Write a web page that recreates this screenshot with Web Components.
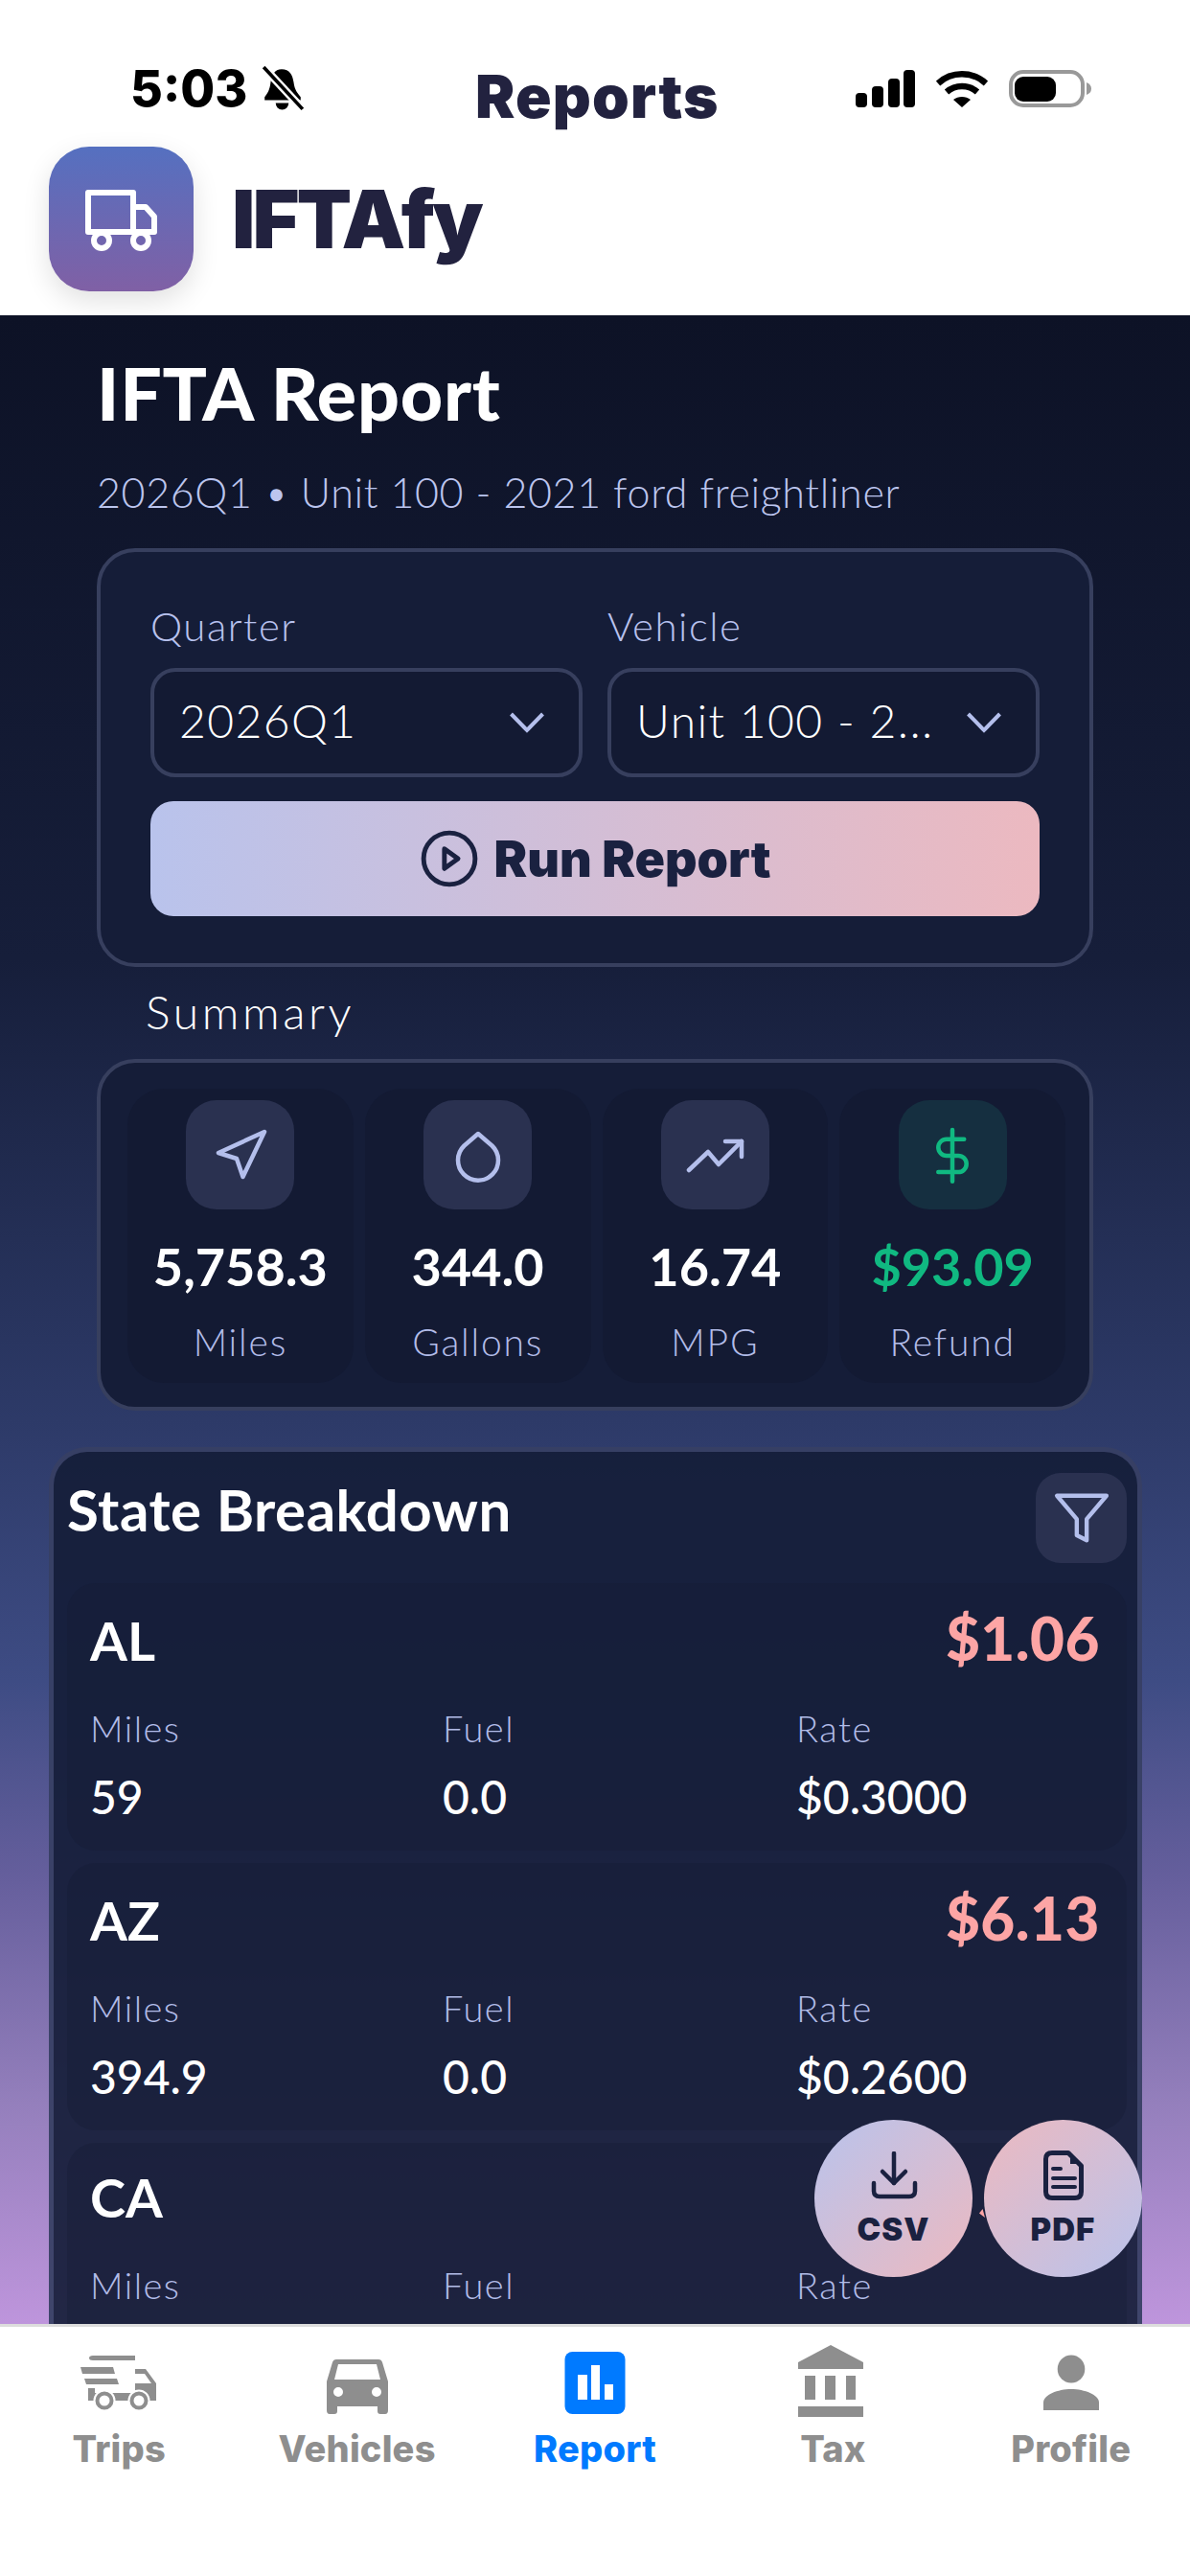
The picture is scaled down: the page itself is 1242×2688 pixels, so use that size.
<!DOCTYPE html>
<html lang="en">
<head>
<meta charset="utf-8">
<title>IFTAfy Reports</title>
<style>
  html, body { margin: 0; padding: 0; }
  body {
    width: 1242px;
    height: 2688px;
    overflow: hidden;
    display: flex;
    flex-direction: column;
    background: #fff;
    font-family: "Lato", "Noto Sans", sans-serif;
  }
</style>
</head>
<body>
  <app-header></app-header>

  <report-screen>
    <report-filters></report-filters>
    <summary-panel>
      <stat-tile value="5,758.3" label="Miles">
        <svg width="113" height="114" viewBox="0 0 113 114" fill="none" stroke="#b4bfec" stroke-width="4.5" stroke-linejoin="round"><path d="M82 33L34 55L53 61L59.5 80Z"/></svg>
      </stat-tile>
      <stat-tile value="344.0" label="Gallons">
        <svg width="113" height="114" viewBox="0 0 113 114" fill="none" stroke="#b4bfec" stroke-width="4.5" stroke-linejoin="round"><path d="M57 35L71.5 47.5A21 21 0 1 1 42.5 47.5Z"/></svg>
      </stat-tile>
      <stat-tile value="16.74" label="MPG">
        <svg width="113" height="114" viewBox="0 0 113 114" fill="none" stroke="#b4bfec" stroke-width="4.5" stroke-linecap="round" stroke-linejoin="round"><path d="M29 73L49 54L60 67L84 43"/><path d="M67 43H84V59"/></svg>
      </stat-tile>
      <stat-tile value="$93.09" label="Refund" refund>
        <svg width="113" height="114" viewBox="0 0 113 114" fill="none" stroke="#10b981" stroke-width="1.85" stroke-linecap="round" stroke-linejoin="round"><g transform="translate(26.6 28.5) scale(2.45)"><path d="M12 1V23"/><path d="M17 5H9.5a3.5 3.5 0 0 0 0 7h5a3.5 3.5 0 0 1 0 7H6"/></g></svg>
      </stat-tile>
    </summary-panel>
    <state-breakdown>
      <state-row code="AL" amount="$1.06" miles="59" fuel="0.0" rate="$0.3000"></state-row>
      <state-row code="AZ" amount="$6.13" miles="394.9" fuel="0.0" rate="$0.2600"></state-row>
      <state-row code="CA" miles=" " fuel=" " rate=" "></state-row>
    </state-breakdown>
    <export-dock slot="over"></export-dock>
  </report-screen>

  <tab-bar>
    <tab-item label="Trips">
      <svg width="100" height="76" viewBox="0 0 100 76" fill="#8e8e8e">
        <path d="M23 11H67V58H60V50H67V16H23Q19 16 19 13.5Q19 11 23 11Z"/>
        <path d="M10 23H44L46 30H12Z"/>
        <path d="M14 35H48L50 41H16Z"/>
        <path d="M18 45H25V50H29V58H18Z"/>
        <rect x="42" y="50" width="20" height="8"/>
        <path fill-rule="evenodd" d="M67 25H78L89 40V58H67ZM67 30V40H84L77 30Z"/>
        <circle cx="35" cy="58" r="10.5" stroke="#fff" stroke-width="2"/>
        <circle cx="35" cy="58" r="5.5" fill="#fff"/>
        <circle cx="71" cy="58" r="10.5" stroke="#fff" stroke-width="2"/>
        <circle cx="71" cy="58" r="5.5" fill="#fff"/>
      </svg>
    </tab-item>
    <tab-item label="Vehicles">
      <svg width="100" height="76" viewBox="0 0 100 76" fill="#8e8e8e">
        <path fill-rule="evenodd" d="M28 15H72Q75 15 76 18L82 38V68Q82 72 79 72H74Q71 72 71 69V64H29V69Q29 72 26 72H21Q18 72 18 68V38L24 18Q25 15 28 15ZM30 20L26 36H74L70 20ZM30 44A5 5 0 1 0 30 54A5 5 0 1 0 30 44ZM70 44A5 5 0 1 0 70 54A5 5 0 1 0 70 44Z"/>
      </svg>
    </tab-item>
    <tab-item label="Report" active>
      <svg width="100" height="76" viewBox="0 0 100 76" fill="#007aff">
        <rect x="18.5" y="7" width="63" height="65" rx="8"/>
        <rect x="32" y="31" width="10" height="26" fill="#fff"/>
        <rect x="46" y="21" width="9" height="36" fill="#fff"/>
        <rect x="60" y="41" width="9" height="16" fill="#fff"/>
      </svg>
    </tab-item>
    <tab-item label="Tax">
      <svg width="100" height="76" viewBox="0 0 100 76" fill="#8e8e8e">
        <path d="M14 18L48 0L82 18V25H14Z"/>
        <rect x="21" y="32" width="11" height="25"/>
        <rect x="42" y="32" width="11" height="25"/>
        <rect x="64" y="32" width="10" height="25"/>
        <rect x="14" y="64" width="68" height="11"/>
      </svg>
    </tab-item>
    <tab-item label="Profile">
      <svg width="100" height="76" viewBox="0 0 100 76" fill="#8e8e8e">
        <ellipse cx="50" cy="25" rx="14.3" ry="14.5"/>
        <path d="M21 68V60C21 52 36 46 50 46C64 46 79 52 79 60V68Z"/>
      </svg>
    </tab-item>
  </tab-bar>

<script>
(function () {
  var headerTemplate = document.createElement('template');
  headerTemplate.innerHTML = `
    <style>
      :host {
        display: block;
        height: 329px;
        flex: none;
        background: #fff;
        font-family: "Inter", sans-serif;
        color: #22223f;
      }
      .status {
        display: grid;
        grid-template-columns: 360px auto 1fr;
        padding: 63px 103px 17px 136px;
        height: 73px;
      }
      .left { display: flex; align-items: center; gap: 14px; height: 60px; }
      .time { font-size: 52px; line-height: 60px; font-weight: 800; color: #000; }
      .title { font-size: 62px; line-height: 70px; margin-top: 3px; font-weight: 900; letter-spacing: 1.2px; }
      .right { display: flex; align-items: center; justify-content: flex-end; gap: 22px; height: 60px; }
      .brand { display: flex; align-items: center; gap: 40px; padding-left: 51px; }
      .logo {
        width: 151px;
        height: 151px;
        border-radius: 42px;
        background: linear-gradient(180deg, #5570c0, #8060a5);
        box-shadow: 0 10px 28px rgba(0, 0, 0, 0.12);
      }
      .logo svg { display: block; }
      .name { font-size: 84px; line-height: 100px; font-weight: 900; letter-spacing: -3px; }
    </style>
    <div class="status">
      <div class="left">
        <span class="time">5:03</span>
        <svg width="46" height="48" viewBox="0 0 44 46" fill="#000">
          <path d="M21 3C29 3 32 9 33 16C34 24 37 27 40 31V34H4V31C7 27 9 24 10 16C11 9 14 3 21 3Z"/>
          <path d="M15 37H28A6.5 6.5 0 0 1 15 37Z"/>
          <path d="M3 1L42 43" stroke="#fff" stroke-width="8"/>
          <path d="M3 1L42 43" stroke="#000" stroke-width="3.5"/>
        </svg>
      </div>
      <div class="title">Reports</div>
      <div class="right">
        <svg width="62" height="40" viewBox="0 0 62 40" fill="#000">
          <rect x="0" y="24" width="12" height="15" rx="4"/>
          <rect x="17" y="17" width="12" height="22" rx="4"/>
          <rect x="34" y="9" width="12" height="30" rx="4"/>
          <rect x="50" y="0" width="12" height="39" rx="4"/>
        </svg>
        <svg width="54" height="40" viewBox="0 0 54 40" fill="none" stroke="#000" stroke-width="6.5">
          <path d="M2 14C16 1 38 1 52 14"/>
          <path d="M11 23C20 15 34 15 43 23"/>
          <path d="M27 39L18 31C23 27 31 27 36 31Z" fill="#000" stroke="none"/>
        </svg>
        <svg width="86" height="40" viewBox="0 0 86 40" fill="none">
          <rect x="2" y="2" width="75" height="35" rx="13" stroke="#999" stroke-width="4"/>
          <rect x="6" y="7" width="43" height="26" rx="9" fill="#000"/>
          <path d="M81 13Q86 15 86 19.5Q86 24 81 26Z" fill="#999"/>
        </svg>
      </div>
    </div>
    <div class="brand">
      <div class="logo">
        <svg width="151" height="151" viewBox="0 0 151 151" fill="none" stroke="#fff" stroke-width="6" stroke-linejoin="round">
          <path d="M41 48H88V89H41Z"/>
          <path d="M88 63H101L110 73V89H88"/>
          <circle cx="55" cy="98" r="8"/>
          <circle cx="96" cy="98" r="8"/>
        </svg>
      </div>
      <div class="name">IFTAfy</div>
    </div>
  `;

  class AppHeader extends HTMLElement {
    constructor() {
      super();
      this.attachShadow({ mode: 'open' });
      this.shadowRoot.appendChild(headerTemplate.content.cloneNode(true));
    }
  }

  var screenTemplate = document.createElement('template');
  screenTemplate.innerHTML = `
    <style>
      :host {
        display: block;
        position: relative;
        flex: 1;
        min-height: 0;
        overflow: hidden;
        color: #fff;
        background: linear-gradient(180deg, #0d1226 0%, #161e3a 32%, #2d3a68 55%, #3e4c84 68%, #665f9d 78%, #947fbc 89%, #be95dc 100%);
      }
      .column { padding: 40px 101px 0; }
      h1 { margin: 0; font-size: 77px; line-height: 80px; font-weight: 900; letter-spacing: 0.8px; }
      .sub { margin-top: 40px; font-size: 43px; line-height: 50px; color: #bcc5ee; font-weight: 300; letter-spacing: 0.65px; }
      .heading { margin: 19px 0 21px 51px; font-size: 48px; line-height: 56px; font-weight: 300; letter-spacing: 3.6px; }
      ::slotted(report-filters) { margin-top: 33px; }
    </style>
    <div class="column">
      <h1>IFTA Report</h1>
      <div class="sub">2026Q1 • Unit 100 - 2021 ford freightliner</div>
      <slot name="top"></slot>
      <div class="heading">Summary</div>
      <slot></slot>
    </div>
    <slot name="over"></slot>
  `;

  class ReportScreen extends HTMLElement {
    constructor() {
      super();
      this.attachShadow({ mode: 'open' });
      this.shadowRoot.appendChild(screenTemplate.content.cloneNode(true));
    }
    connectedCallback() {
      // filters sit above the Summary heading
      var filters = this.querySelector('report-filters');
      if (filters) filters.setAttribute('slot', 'top');
    }
  }

  var filtersTemplate = document.createElement('template');
  filtersTemplate.innerHTML = `
    <style>
      :host {
        display: block;
        box-sizing: border-box;
        height: 437px;
        padding: 53px 52px 0;
        background: #151d38;
        border: 4px solid #373f5e;
        border-radius: 40px;
      }
      .fields { display: grid; grid-template-columns: 1fr 1fr; gap: 26px; }
      .run {
        display: flex;
        align-items: center;
        justify-content: center;
        gap: 16px;
        height: 120px;
        margin-top: 25px;
        border-radius: 24px;
        background: linear-gradient(90deg, #b9c3ec, #ecb9c0);
        color: #1a2140;
        font-family: "Inter", sans-serif;
        font-size: 52px;
        font-weight: 900;
      }
    </style>
    <div class="fields">
      <select-field label="Quarter" value="2026Q1"></select-field>
      <select-field label="Vehicle" value="Unit 100 - 2..."></select-field>
    </div>
    <div class="run">
      <svg width="62" height="62" viewBox="0 0 24 24" fill="none" stroke="#1a2140" stroke-width="1.9" stroke-linejoin="round"><circle cx="12" cy="12" r="10.4"/><path d="M10 8L15.5 12L10 16Z"/></svg>
      <span>Run Report</span>
    </div>
  `;

  class ReportFilters extends HTMLElement {
    constructor() {
      super();
      this.attachShadow({ mode: 'open' });
      this.shadowRoot.appendChild(filtersTemplate.content.cloneNode(true));
    }
  }

  var selectTemplate = document.createElement('template');
  selectTemplate.innerHTML = `
    <style>
      :host { display: block; min-width: 0; }
      .label { font-size: 42px; line-height: 46px; color: #b8c2ee; letter-spacing: 1.5px; font-weight: 300; padding-top: 1px; margin-bottom: -1px; }
      .box {
        box-sizing: border-box;
        display: flex;
        align-items: center;
        justify-content: space-between;
        height: 114px;
        margin-top: 22px;
        padding: 0 36px 0 26px;
        background: #131a33;
        border: 4px solid #373f5e;
        border-radius: 26px;
      }
      .value { font-size: 48px; white-space: nowrap; color: #fff; font-weight: 300; letter-spacing: 1.4px; padding-bottom: 5px; }
    </style>
    <div class="label"></div>
    <div class="box">
      <span class="value"></span>
      <svg width="36" height="22" viewBox="0 0 36 22" fill="none" stroke="#b4bfec" stroke-width="4"><path d="M1.5 2L18 19L34.500 2"/></svg>
    </div>
  `;

  class SelectField extends HTMLElement {
    constructor() {
      super();
      this.attachShadow({ mode: 'open' });
      this.shadowRoot.appendChild(selectTemplate.content.cloneNode(true));
      this.shadowRoot.querySelector('.label').textContent = this.getAttribute('label');
      this.shadowRoot.querySelector('.value').textContent = this.getAttribute('value');
    }
  }

  var summaryTemplate = document.createElement('template');
  summaryTemplate.innerHTML = `
    <style>
      :host {
        display: grid;
        grid-template-columns: repeat(4, 1fr);
        gap: 12px;
        box-sizing: border-box;
        height: 367px;
        padding: 27px 25px 25px 28px;
        background: #151d38;
        border: 4px solid #373f5e;
        border-radius: 40px;
      }
    </style>
    <slot></slot>
  `;

  class SummaryPanel extends HTMLElement {
    constructor() {
      super();
      this.attachShadow({ mode: 'open' });
      this.shadowRoot.appendChild(summaryTemplate.content.cloneNode(true));
    }
  }

  var tileTemplate = document.createElement('template');
  tileTemplate.innerHTML = `
    <style>
      :host {
        display: flex;
        flex-direction: column;
        align-items: center;
        min-width: 0;
        padding-top: 12px;
        background: #131a33;
        border-radius: 38px;
      }
      .icon {
        width: 113px;
        height: 114px;
        border-radius: 32px;
        background: #2a3150;
      }
      :host([refund]) .icon { background: #152f40; }
      ::slotted(svg) { display: block; }
      .value { margin-top: 30px; font-size: 54px; line-height: 60px; font-weight: 700; color: #fff; }
      :host([refund]) .value { color: #10b981; }
      .label { margin-top: 25px; font-size: 39px; line-height: 46px; color: #b2bce8; letter-spacing: 1.8px; font-weight: 300; }
    </style>
    <div class="icon"><slot></slot></div>
    <div class="value"></div>
    <div class="label"></div>
  `;

  class StatTile extends HTMLElement {
    constructor() {
      super();
      this.attachShadow({ mode: 'open' });
      this.shadowRoot.appendChild(tileTemplate.content.cloneNode(true));
      this.shadowRoot.querySelector('.value').textContent = this.getAttribute('value');
      this.shadowRoot.querySelector('.label').textContent = this.getAttribute('label');
    }
  }

  var breakdownTemplate = document.createElement('template');
  breakdownTemplate.innerHTML = `
    <style>
      :host {
        display: block;
        box-sizing: border-box;
        width: 1141px;
        margin: 38px 0 0 -50px;
        padding: 22px 11px 0 14px;
        background: rgba(21, 29, 56, 0.92);
        border: 5px solid rgba(150, 160, 220, 0.25);
        border-radius: 40px;
      }
      .top { display: flex; align-items: center; justify-content: space-between; margin-bottom: 21px; }
      h2 { margin: -18px 0 0; font-size: 60px; line-height: 68px; font-weight: 700; letter-spacing: 0.5px; }
      .filter {
        width: 95px;
        height: 94px;
        display: flex;
        align-items: center;
        justify-content: center;
        background: #2a3150;
        border-radius: 26px;
      }
      .rows { display: grid; gap: 13px; }
    </style>
    <div class="top">
      <h2>State Breakdown</h2>
      <div class="filter">
        <svg width="62" height="62" viewBox="0 0 24 24" fill="none" stroke="#b4bfec" stroke-width="1.7" stroke-linejoin="round"><path d="M2 3H22L14 12.46V21L10 19V12.46Z"/></svg>
      </div>
    </div>
    <div class="rows"><slot></slot></div>
  `;

  class StateBreakdown extends HTMLElement {
    constructor() {
      super();
      this.attachShadow({ mode: 'open' });
      this.shadowRoot.appendChild(breakdownTemplate.content.cloneNode(true));
    }
  }

  var rowTemplate = document.createElement('template');
  rowTemplate.innerHTML = `
    <style>
      :host {
        display: block;
        box-sizing: border-box;
        height: 279px;
        padding: 26px 28px 0 24px;
        background: rgba(20, 28, 50, 0.3);
        border-radius: 30px;
      }
      .head { display: flex; justify-content: space-between; align-items: baseline; }
      .code { font-size: 56px; line-height: 62px; font-weight: 700; }
      .amount { font-size: 62px; line-height: 62px; font-weight: 900; color: #fda5a5; letter-spacing: 0.5px; }
      .cols { display: grid; grid-template-columns: 368px 369px 1fr; margin-top: 38px; }
      .key { font-size: 38px; line-height: 44px; color: #b2bce8; font-weight: 300; letter-spacing: 1.5px; }
      .val { margin-top: 24px; font-size: 48px; line-height: 52px; font-weight: 500; color: #fff; }
    </style>
    <div class="head"><span class="code"></span><span class="amount"></span></div>
    <div class="cols">
      <div><div class="key">Miles</div><div class="val" data-k="miles"></div></div>
      <div><div class="key">Fuel</div><div class="val" data-k="fuel"></div></div>
      <div><div class="key">Rate</div><div class="val" data-k="rate"></div></div>
    </div>
  `;

  class StateRow extends HTMLElement {
    constructor() {
      super();
      this.attachShadow({ mode: 'open' });
      this.shadowRoot.appendChild(rowTemplate.content.cloneNode(true));
      this.shadowRoot.querySelector('.code').textContent = this.getAttribute('code');
      this.shadowRoot.querySelector('.amount').textContent = this.getAttribute('amount') || '';
      let self = this;
      this.shadowRoot.querySelectorAll('.val').forEach(function (el) {
        el.textContent = self.getAttribute(el.dataset.k);
      });
    }
  }

  var dockTemplate = document.createElement('template');
  dockTemplate.innerHTML = `
    <style>
      :host {
        position: absolute;
        right: 50px;
        bottom: 49px;
        display: flex;
        gap: 12px;
      }
      .fab {
        box-sizing: border-box;
        width: 165px;
        height: 164px;
        border-radius: 50%;
        display: flex;
        flex-direction: column;
        align-items: center;
        color: #1a2140;
        font-family: "Inter", sans-serif;
        font-size: 33px;
        line-height: 40px;
        font-weight: 900;
        letter-spacing: 1px;
      }
      .csv { padding-top: 33px; gap: 11px; background: linear-gradient(135deg, #b9c3ec, #ecb9c0); }
      .pdf { padding-top: 30px; gap: 8px; background: linear-gradient(135deg, #ecb9c0, #b9c3ec); }
      .speck {
        position: absolute;
        left: 172px;
        top: 93px;
        width: 6px;
        height: 9px;
        background: #fda5a5;
        clip-path: polygon(60% 0, 100% 100%, 0 50%);
      }
      svg { display: block; flex: none; }
    </style>
    <div class="fab csv">
      <svg width="50" height="50" viewBox="0 0 50 50" fill="none" stroke="#1a2140" stroke-width="4.5" stroke-linecap="round" stroke-linejoin="round">
        <path d="M25 2V33"/><path d="M13 21L25 33L37 21"/><path d="M4 33V41Q4 47 10 47H41Q47 47 47 41V33"/>
      </svg>
      <span>CSV</span>
    </div>
    <div class="fab pdf">
      <svg width="50" height="56" viewBox="0 0 50 56" fill="none" stroke="#1a2140" stroke-width="5" stroke-linejoin="round">
        <path d="M13 4.500H30L43.500 18V45Q43.500 51.500 37 51.500H13Q6.500 51.500 6.500 45V11Q6.500 4.500 13 4.500Z"/>
        <path d="M32 8V16H40Z" fill="#1a2140" stroke="none"/>
        <path d="M14 21H22M14 31H37M14 40H37" stroke-width="4" stroke-linecap="round"/>
      </svg>
      <span>PDF</span>
    </div>
    <div class="speck"></div>
  `;

  class ExportDock extends HTMLElement {
    constructor() {
      super();
      this.attachShadow({ mode: 'open' });
      this.shadowRoot.appendChild(dockTemplate.content.cloneNode(true));
    }
  }

  var tabBarTemplate = document.createElement('template');
  tabBarTemplate.innerHTML = `
    <style>
      :host {
        display: grid;
        grid-template-columns: repeat(5, 1fr);
        align-content: start;
        flex: none;
        box-sizing: border-box;
        height: 263px;
        padding-top: 19px;
        background: #fff;
        border-top: 3px solid #dcdcdc;
      }
    </style>
    <slot></slot>
  `;

  class TabBar extends HTMLElement {
    constructor() {
      super();
      this.attachShadow({ mode: 'open' });
      this.shadowRoot.appendChild(tabBarTemplate.content.cloneNode(true));
    }
  }

  var tabTemplate = document.createElement('template');
  tabTemplate.innerHTML = `
    <style>
      :host {
        display: flex;
        flex-direction: column;
        align-items: center;
        gap: 10px;
        color: #8e8e8e;
        font-family: "Inter", sans-serif;
        font-size: 38px;
        line-height: 44px;
        font-weight: 800;
        letter-spacing: 0.2px;
      }
      :host([active]) { color: #007aff; }
      ::slotted(svg) { display: block; }
    </style>
    <slot></slot>
    <span></span>
  `;

  class TabItem extends HTMLElement {
    constructor() {
      super();
      this.attachShadow({ mode: 'open' });
      this.shadowRoot.appendChild(tabTemplate.content.cloneNode(true));
      this.shadowRoot.querySelector('span').textContent = this.getAttribute('label');
    }
  }

  window.customElements.define('app-header', AppHeader);
  window.customElements.define('report-screen', ReportScreen);
  window.customElements.define('report-filters', ReportFilters);
  window.customElements.define('select-field', SelectField);
  window.customElements.define('summary-panel', SummaryPanel);
  window.customElements.define('stat-tile', StatTile);
  window.customElements.define('state-breakdown', StateBreakdown);
  window.customElements.define('state-row', StateRow);
  window.customElements.define('export-dock', ExportDock);
  window.customElements.define('tab-bar', TabBar);
  window.customElements.define('tab-item', TabItem);
})();
</script>
</body>
</html>
